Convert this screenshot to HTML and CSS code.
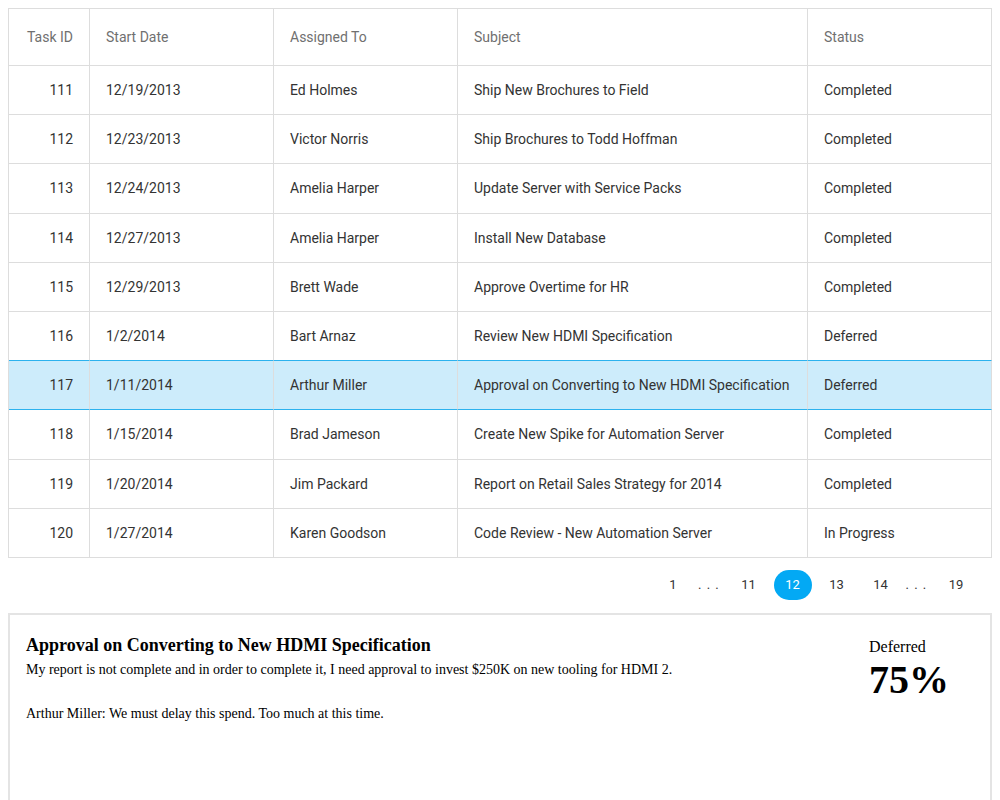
FILE: index.html
```html
<!DOCTYPE html>
<html>
<head>
<meta charset="utf-8">
<link rel="stylesheet" href="styles.css">
</head>
<body>
<div class="page">
  <table class="grid">
    <colgroup>
      <col class="c-id"><col class="c-date"><col class="c-assigned"><col class="c-subject"><col class="c-status">
    </colgroup>
    <thead>
      <tr>
        <th class="num">Task ID</th><th>Start Date</th><th>Assigned To</th><th>Subject</th><th>Status</th>
      </tr>
    </thead>
    <tbody>
      <tr><td class="num">111</td><td>12/19/2013</td><td>Ed Holmes</td><td>Ship New Brochures to Field</td><td>Completed</td></tr>
      <tr><td class="num">112</td><td>12/23/2013</td><td>Victor Norris</td><td>Ship Brochures to Todd Hoffman</td><td>Completed</td></tr>
      <tr><td class="num">113</td><td>12/24/2013</td><td>Amelia Harper</td><td>Update Server with Service Packs</td><td>Completed</td></tr>
      <tr><td class="num">114</td><td>12/27/2013</td><td>Amelia Harper</td><td>Install New Database</td><td>Completed</td></tr>
      <tr><td class="num">115</td><td>12/29/2013</td><td>Brett Wade</td><td>Approve Overtime for HR</td><td>Completed</td></tr>
      <tr class="before-selected"><td class="num">116</td><td>1/2/2014</td><td>Bart Arnaz</td><td>Review New HDMI Specification</td><td>Deferred</td></tr>
      <tr class="selected"><td class="num">117</td><td>1/11/2014</td><td>Arthur Miller</td><td>Approval on Converting to New HDMI Specification</td><td>Deferred</td></tr>
      <tr><td class="num">118</td><td>1/15/2014</td><td>Brad Jameson</td><td>Create New Spike for Automation Server</td><td>Completed</td></tr>
      <tr><td class="num">119</td><td>1/20/2014</td><td>Jim Packard</td><td>Report on Retail Sales Strategy for 2014</td><td>Completed</td></tr>
      <tr><td class="num">120</td><td>1/27/2014</td><td>Karen Goodson</td><td>Code Review - New Automation Server</td><td>In Progress</td></tr>
    </tbody>
  </table>

  <div class="pager">
    <span class="page-btn">1</span>
    <span class="page-ellipsis">. . .</span>
    <span class="page-btn">11</span>
    <span class="page-btn active">12</span>
    <span class="page-btn">13</span>
    <span class="page-btn">14</span>
    <span class="page-ellipsis">. . .</span>
    <span class="page-btn">19</span>
  </div>

  <div class="detail">
    <div class="detail-main">
      <div class="detail-title">Approval on Converting to New HDMI Specification</div>
      <p class="detail-text">My report is not complete and in order to complete it, I need approval to invest $250K on new tooling for HDMI 2.</p>
      <p class="detail-text">Arthur Miller: We must delay this spend. Too much at this time.</p>
    </div>
    <div class="detail-side">
      <div class="detail-status">Deferred</div>
      <div class="detail-pct">75%</div>
    </div>
  </div>
</div>
</body>
</html>
```

FILE: styles.css
```css
html, body {
  margin: 0;
  padding: 0;
  background: #fff;
}

.page {
  padding: 8px;
}

.grid {
  width: 984px;
  table-layout: fixed;
  border-collapse: separate;
  border-spacing: 0;
  border-top: 1px solid #dddddd;
  border-left: 1px solid #dddddd;
  font-family: Roboto, "Liberation Sans", sans-serif;
  font-size: 14px;
  color: #333333;
}

.c-id { width: 81px; }
.c-date { width: 184px; }
.c-assigned { width: 184px; }
.c-subject { width: 350px; }
.c-status { width: 184px; }

.grid th,
.grid td {
  box-sizing: border-box;
  padding: 0 16px;
  text-align: left;
  white-space: nowrap;
  border-right: 1px solid #dddddd;
  border-bottom: 1px solid #dddddd;
}

.grid th {
  height: 57px;
  font-weight: 400;
  color: #707070;
}

.grid td {
  height: 49.2px;
}

.grid .num {
  text-align: right;
}

.grid tr.before-selected td {
  border-bottom-color: #2cb2ee;
}

.grid tr.selected td {
  background: #cdecfb;
  border-bottom-color: #2cb2ee;
}

.pager {
  display: flex;
  justify-content: flex-end;
  align-items: center;
  gap: 6px;
  padding: 12px 17px 13px 0;
  font-family: Roboto, "Liberation Sans", sans-serif;
  font-size: 13px;
  color: #333333;
}

.page-btn {
  height: 30px;
  width: 38px;
  box-sizing: border-box;
  border-radius: 15px;
  display: flex;
  align-items: center;
  justify-content: center;
}

.page-btn.active {
  background: #03a9f4;
  color: #ffffff;
}

.page-ellipsis {
  height: 30px;
  width: 25.5px;
  display: flex;
  align-items: center;
  letter-spacing: 1px;
}

.detail {
  display: flex;
  border: 2px solid #e4e4e4;
  height: 300px;
  padding: 16px;
  font-family: "Liberation Serif", serif;
  color: #000;
}

.detail-main {
  flex: 1;
}

.detail-title {
  font-size: 18px;
  font-weight: 700;
  line-height: 22px;
  margin-top: 3px;
  margin-bottom: 6px;
}

.detail-text {
  font-size: 14px;
  line-height: 16px;
  margin: 0 0 28px 0;
}

.detail-side {
  width: 105px;
}

.detail-status {
  font-size: 16px;
  line-height: 20px;
  margin-top: 6px;
}

.detail-pct {
  font-size: 40px;
  font-weight: 700;
  line-height: 40px;
  margin-top: 3px;
}
```
